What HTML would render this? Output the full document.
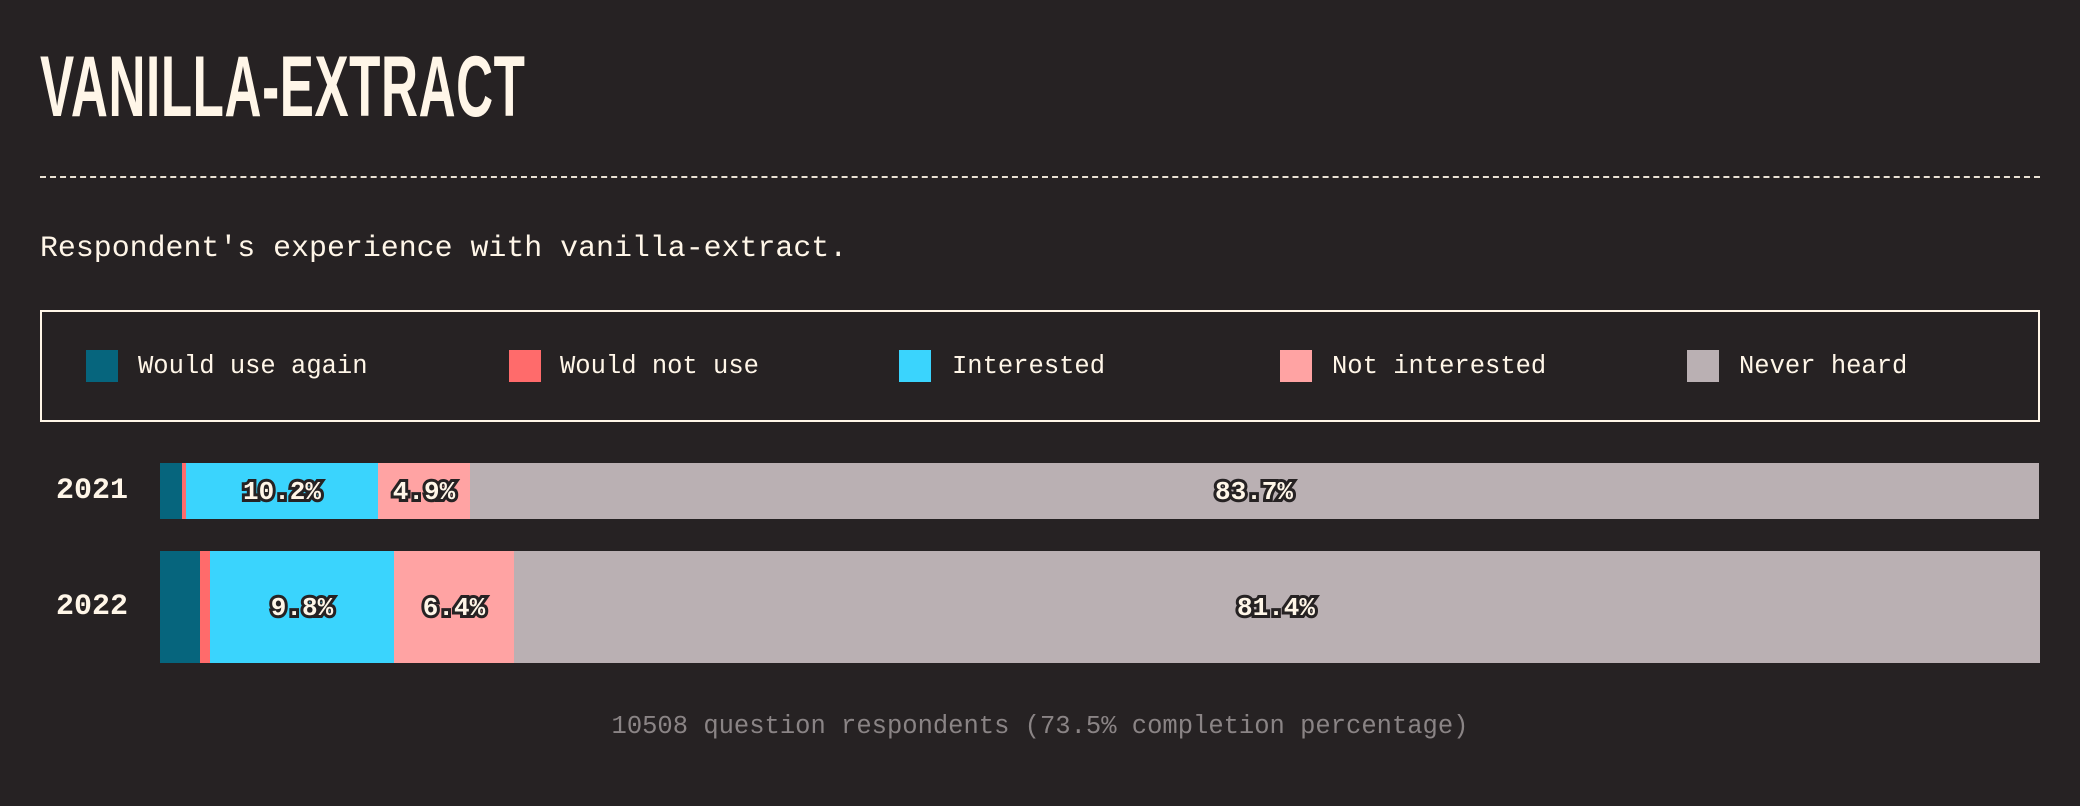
<!DOCTYPE html>
<html><head><meta charset="utf-8"><style>
*{margin:0;padding:0;box-sizing:border-box}
body{width:2080px;height:806px;background:#262223;color:#fff6e8;font-family:"Liberation Mono",monospace;position:relative;overflow:hidden}
.t{position:absolute;left:40px;top:44px;font-family:"Liberation Sans",sans-serif;font-weight:bold;font-size:86px;line-height:86px;transform:scaleX(0.595);transform-origin:left top;white-space:nowrap;letter-spacing:1px}
.dash{position:absolute;left:40px;top:176px;width:2000px;border-top:2px dashed #fff6e8;opacity:.9}
.sub{position:absolute;left:40px;top:229px;font-size:29.9px;line-height:38px;white-space:nowrap}
.leg{position:absolute;left:40px;top:310px;width:2000px;height:112px;border:2px solid #fff6e8}
.sq{position:absolute;top:38px;width:32px;height:32px}
.lt{position:absolute;top:37px;font-size:25.5px;line-height:36px;white-space:nowrap}
.yr{position:absolute;left:56px;font-size:30px;font-weight:bold;line-height:36px}
.seg{position:absolute}
.lb{position:absolute;font-size:26px;font-weight:bold;color:#fff6e8;-webkit-text-stroke:6px #262223;paint-order:stroke fill;transform:translate(-50%,-50%);white-space:nowrap;line-height:30px}
.foot{position:absolute;left:0;width:2080px;text-align:center;top:710px;font-size:25.5px;line-height:34px;color:#8a8485}
</style></head><body>
<div class="t">VANILLA-EXTRACT</div>
<div class="dash"></div>
<div class="sub">Respondent's experience with vanilla-extract.</div>
<div class="leg">
<div class="sq" style="left:44px;background:#06657d"></div><div class="lt" style="left:96px">Would use again</div>
<div class="sq" style="left:467px;background:#ff6b6b"></div><div class="lt" style="left:518px">Would not use</div>
<div class="sq" style="left:857px;background:#3ad4fd"></div><div class="lt" style="left:910px">Interested</div>
<div class="sq" style="left:1238px;background:#ffa3a3"></div><div class="lt" style="left:1290px">Not interested</div>
<div class="sq" style="left:1645px;background:#bab0b3"></div><div class="lt" style="left:1697px">Never heard</div>
</div>
<div class="yr" style="top:473px">2021</div>
<div class="yr" style="top:589px">2022</div>
<div class="seg" style="left:160px;top:463px;width:22px;height:56px;background:#06657d"></div>
<div class="seg" style="left:182px;top:463px;width:4px;height:56px;background:#ff6b6b"></div>
<div class="seg" style="left:186px;top:463px;width:192px;height:56px;background:#3ad4fd"></div>
<div class="seg" style="left:378px;top:463px;width:92px;height:56px;background:#ffa3a3"></div>
<div class="seg" style="left:470px;top:463px;width:1569px;height:56px;background:#bab0b3"></div>
<div class="seg" style="left:160px;top:551px;width:40px;height:112px;background:#06657d"></div>
<div class="seg" style="left:200px;top:551px;width:10px;height:112px;background:#ff6b6b"></div>
<div class="seg" style="left:210px;top:551px;width:184px;height:112px;background:#3ad4fd"></div>
<div class="seg" style="left:394px;top:551px;width:120px;height:112px;background:#ffa3a3"></div>
<div class="seg" style="left:514px;top:551px;width:1526px;height:112px;background:#bab0b3"></div>
<div class="lb" style="left:282px;top:492px">10.2%</div>
<div class="lb" style="left:424px;top:492px">4.9%</div>
<div class="lb" style="left:1254px;top:492px">83.7%</div>
<div class="lb" style="left:302px;top:608px">9.8%</div>
<div class="lb" style="left:454px;top:608px">6.4%</div>
<div class="lb" style="left:1276px;top:608px">81.4%</div>
<div class="foot">10508 question respondents (73.5% completion percentage)</div>
</body></html>
